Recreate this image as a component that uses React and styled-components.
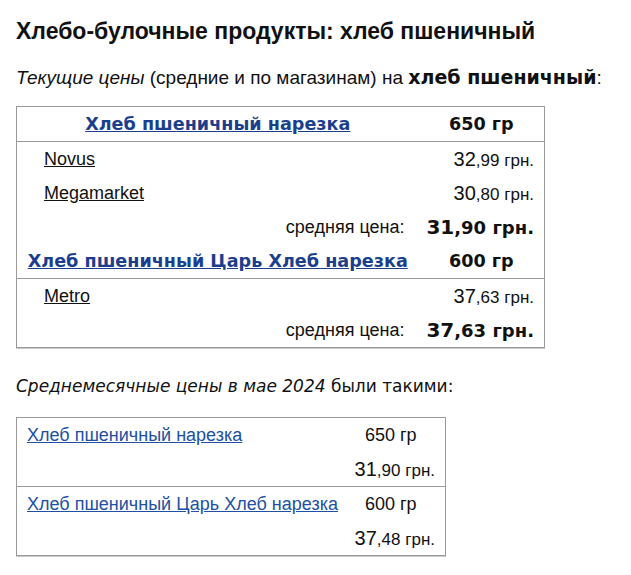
import React from "react";
import styled, { createGlobalStyle } from "styled-components";

const Global = createGlobalStyle`
  html, body { margin: 0; padding: 0; background: #fff; }
  body { font-family: "Liberation Sans", Arial, sans-serif; color: #111; }
`;

const Page = styled.div`
  padding: 12px 16px 16px 16px;
  width: 599px;
`;

const Title = styled.h1`
  margin: 4px 0 0 0;
  font-size: 23px;
  line-height: 30px;
  font-weight: bold;
  color: #111;
`;

const Lead = styled.p`
  margin: 19px 0 0 0;
  font-size: 19px;
  line-height: 24px;
  b { font-family: "DejaVu Sans", Verdana, sans-serif; font-size: 19px; }
`;

const Table = styled.table`
  border-collapse: collapse;
  border: 1px solid #9a9a9a;
  box-shadow: 0 1px 0 #c8c8c8;
  table-layout: fixed;
  width: ${(p) => p.$w}px;
  margin-top: ${(p) => p.$mt}px;
`;

const Col = styled.col`
  width: ${(p) => p.$w}px;
`;

const HeadCell = styled.td`
  height: 34px;
  padding: 0 ${(p) => p.$px ?? 8}px;
  text-align: center;
  font-family: "DejaVu Sans", Verdana, sans-serif;
  font-weight: bold;
  font-size: 17.6px;
  border-bottom: 1px solid #9a9a9a;
  white-space: nowrap;
`;

const HeadLink = styled.a`
  color: #1b3f8d;
  text-decoration: underline;
`;

const Cell = styled.td`
  height: 34px;
  padding: 0 ${(p) => p.$pr ?? 10}px 0 ${(p) => p.$pl ?? 10}px;
  text-align: ${(p) => p.$align || "left"};
  font-size: 18px;
  vertical-align: middle;
  white-space: nowrap;
`;

const StoreLink = styled.a`
  color: #111;
  text-decoration: underline;
`;

const Big = styled.span`
  font-size: 20px;
`;
const Small = styled.span`
  font-size: 17px;
`;

const AvgPrice = styled.span`
  font-family: "DejaVu Sans", Verdana, sans-serif;
  font-weight: bold;
  font-size: 18px;
`;
const AvgBig = styled.span`
  font-size: 20px;
`;

const Section = styled.p`
  margin: 26px 0 0 0;
  font-family: "DejaVu Sans", Verdana, sans-serif;
  font-size: 17px;
  line-height: 24px;
`;

const GroupRow = styled.tr`
  border-top: ${(p) => (p.$first ? "none" : "1px solid #9a9a9a")};
`;

const ListLink = styled.a`
  color: #2150a2;
  text-decoration: underline;
`;

const Price = ({ whole, frac }) => (
  <>
    <Big>{whole}</Big>
    <Small>,{frac} грн.</Small>
  </>
);

const current = [
  {
    name: "Хлеб пшеничный нарезка",
    weight: "650 гр",
    stores: [
      ["Novus", "32", "99"],
      ["Megamarket", "30", "80"],
    ],
    avg: ["31", "90"],
  },
  {
    name: "Хлеб пшеничный Царь Хлеб нарезка",
    weight: "600 гр",
    stores: [["Metro", "37", "63"]],
    avg: ["37", "63"],
  },
];

const monthly = [
  { name: "Хлеб пшеничный нарезка", weight: "650 гр", price: ["31", "90"] },
  { name: "Хлеб пшеничный Царь Хлеб нарезка", weight: "600 гр", price: ["37", "48"] },
];

export default function App() {
  return (
    <Page>
      <Global />
      <Title>Хлебо-булочные продукты: хлеб пшеничный</Title>
      <Lead>
        <i>Текущие цены</i> (средние и по магазинам) на <b>хлеб пшеничный</b>:
      </Lead>
      <Table $w={528} $mt={16}>
        <colgroup>
          <Col $w={402} />
          <Col $w={126} />
        </colgroup>
        <tbody>
          {current.map((g) => (
            <React.Fragment key={g.name}>
              <tr>
                <HeadCell>
                  <HeadLink href="#">{g.name}</HeadLink>
                </HeadCell>
                <HeadCell $px={2}>{g.weight}</HeadCell>
              </tr>
              {g.stores.map(([s, w, f]) => (
                <tr key={s}>
                  <Cell $pl={27}>
                    <StoreLink href="#">{s}</StoreLink>
                  </Cell>
                  <Cell $align="right" $pl={2}>
                    <Price whole={w} frac={f} />
                  </Cell>
                </tr>
              ))}
              <tr>
                <Cell $align="right" $pr={14}>
                  средняя цена:
                </Cell>
                <Cell $align="right" $pl={2}>
                  <AvgPrice>
                    <AvgBig>{g.avg[0]}</AvgBig>,{g.avg[1]} грн.
                  </AvgPrice>
                </Cell>
              </tr>
            </React.Fragment>
          ))}
        </tbody>
      </Table>
      <Section>
        <i>Среднемесячные цены в мае 2024</i> были такими:
      </Section>
      <Table $w={429} $mt={19}>
        <colgroup>
          <Col $w={328} />
          <Col $w={101} />
        </colgroup>
        <tbody>
          {monthly.map((m, i) => (
            <React.Fragment key={m.name}>
              <GroupRow $first={i === 0}>
                <Cell $pr={0}>
                  <ListLink href="#">{m.name}</ListLink>
                </Cell>
                <Cell $align="center" $pl={2}>{m.weight}</Cell>
              </GroupRow>
              <tr>
                <Cell />
                <Cell $align="right" $pl={2}>
                  <Price whole={m.price[0]} frac={m.price[1]} />
                </Cell>
              </tr>
            </React.Fragment>
          ))}
        </tbody>
      </Table>
    </Page>
  );
}
